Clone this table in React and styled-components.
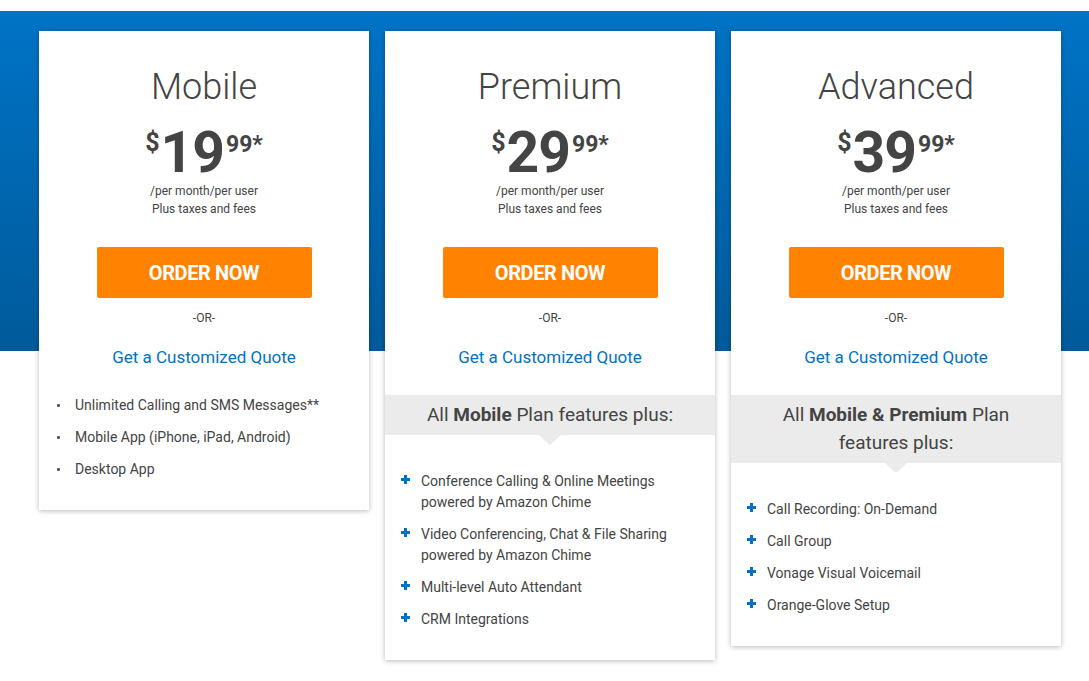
import React from "react";
import styled, { createGlobalStyle } from "styled-components";

const GlobalStyle = createGlobalStyle`
  body {
    margin: 0;
    background: #fff;
    font-family: Roboto, "Liberation Sans", Arial, sans-serif;
    color: #444;
  }
`;

const Section = styled.section`
  margin-top: 11px;
  padding: 20px 0 20px 39px;
  background: linear-gradient(180deg, #0073c6 0%, #0068b2 45%, #005a9a 100%) top left / 100% 340px no-repeat;
  display: flex;
  align-items: flex-start;
  gap: 16px;
`;

const Card = styled.div`
  width: 330px;
  background: #fff;
  box-shadow: 0 1px 5px rgba(0, 0, 0, 0.28);
  padding: 35px 0 30px;
  display: flex;
  flex-direction: column;
  align-items: center;
  text-align: center;
`;

const Title = styled.h2`
  margin: 0;
  font-size: 36px;
  font-weight: 300;
  line-height: 43px;
  color: #444;
`;

const Price = styled.div`
  margin-top: 15px;
  display: flex;
  align-items: flex-start;
  font-weight: 700;
  color: #444;
`;

const Dollar = styled.span`
  font-size: 25px;
  line-height: 24px;
  margin-top: 7px;
  margin-right: 1px;
`;

const Amount = styled.span`
  font-size: 57px;
  line-height: 58px;
  letter-spacing: -1px;
`;

const Cents = styled.span`
  font-size: 23px;
  line-height: 22px;
  margin-top: 10px;
  margin-left: 2px;
`;

const Terms = styled.div`
  font-size: 12px;
  line-height: 18px;
  color: #444;
`;

const OrderButton = styled.button`
  margin-top: 29px;
  width: 215px;
  height: 51px;
  border: 0;
  border-radius: 2px;
  background: #ff8300;
  color: #fff;
  font-family: Roboto, "Liberation Sans", Arial, sans-serif;
  font-size: 20px;
  font-weight: 700;
  letter-spacing: -0.4px;
  cursor: pointer;
`;

const Or = styled.div`
  margin-top: 11px;
  font-size: 12px;
  line-height: 18px;
  color: #444;
`;

const Quote = styled.a`
  margin-top: 18px;
  font-size: 17px;
  line-height: 24px;
  color: #0072c6;
  text-decoration: none;
  cursor: pointer;
`;

const Banner = styled.div`
  position: relative;
  align-self: stretch;
  margin-top: 26px;
  padding: 6px 30px;
  background: #ebebeb;
  font-size: 19px;
  line-height: 28px;
  color: #444;
  b {
    font-weight: 700;
  }
  &::after {
    content: "";
    position: absolute;
    left: 50%;
    top: 100%;
    margin-left: -11px;
    border-left: 11px solid transparent;
    border-right: 11px solid transparent;
    border-top: 10px solid #ebebeb;
  }
`;

const List = styled.ul`
  align-self: stretch;
  list-style: none;
  margin: ${(p) => (p.$afterBanner ? "36px" : "26px")} 0 0;
  padding: 0 20px 0 36px;
  display: flex;
  flex-direction: column;
  gap: 11px;
  text-align: left;
`;

const Item = styled.li`
  position: relative;
  font-size: 14px;
  line-height: 21px;
  color: #444;
  &::before {
    content: "";
    position: absolute;
    ${(p) =>
      p.$plus
        ? `
      left: -20px;
      top: 4px;
      width: 9px;
      height: 9px;
      background:
        linear-gradient(#0072c6, #0072c6) center / 9px 3px no-repeat,
        linear-gradient(#0072c6, #0072c6) center / 3px 9px no-repeat;
    `
        : `
      left: -18px;
      top: 9px;
      width: 3px;
      height: 3px;
      border-radius: 1px;
      background: #555;
    `}
  }
`;

const plans = [
  {
    name: "Mobile",
    price: "19",
    features: [
      "Unlimited Calling and SMS Messages**",
      "Mobile App (iPhone, iPad, Android)",
      "Desktop App",
    ],
  },
  {
    name: "Premium",
    price: "29",
    banner: (
      <>
        All <b>Mobile</b> Plan features plus:
      </>
    ),
    features: [
      "Conference Calling & Online Meetings powered by Amazon Chime",
      "Video Conferencing, Chat & File Sharing powered by Amazon Chime",
      "Multi-level Auto Attendant",
      "CRM Integrations",
    ],
  },
  {
    name: "Advanced",
    price: "39",
    banner: (
      <>
        All <b>Mobile &amp; Premium</b> Plan features plus:
      </>
    ),
    features: [
      "Call Recording: On-Demand",
      "Call Group",
      "Vonage Visual Voicemail",
      "Orange-Glove Setup",
    ],
  },
];

const PlanCard = ({ name, price, banner, features }) => (
  <Card>
    <Title>{name}</Title>
    <Price>
      <Dollar>$</Dollar>
      <Amount>{price}</Amount>
      <Cents>99*</Cents>
    </Price>
    <Terms>
      /per month/per user
      <br />
      Plus taxes and fees
    </Terms>
    <OrderButton>ORDER NOW</OrderButton>
    <Or>-OR-</Or>
    <Quote>Get a Customized Quote</Quote>
    {banner && <Banner>{banner}</Banner>}
    <List $afterBanner={!!banner}>
      {features.map((f) => (
        <Item key={f} $plus={!!banner}>
          {f}
        </Item>
      ))}
    </List>
  </Card>
);

export default function App() {
  return (
    <>
      <GlobalStyle />
      <Section>
        {plans.map((p) => (
          <PlanCard key={p.name} {...p} />
        ))}
      </Section>
    </>
  );
}
